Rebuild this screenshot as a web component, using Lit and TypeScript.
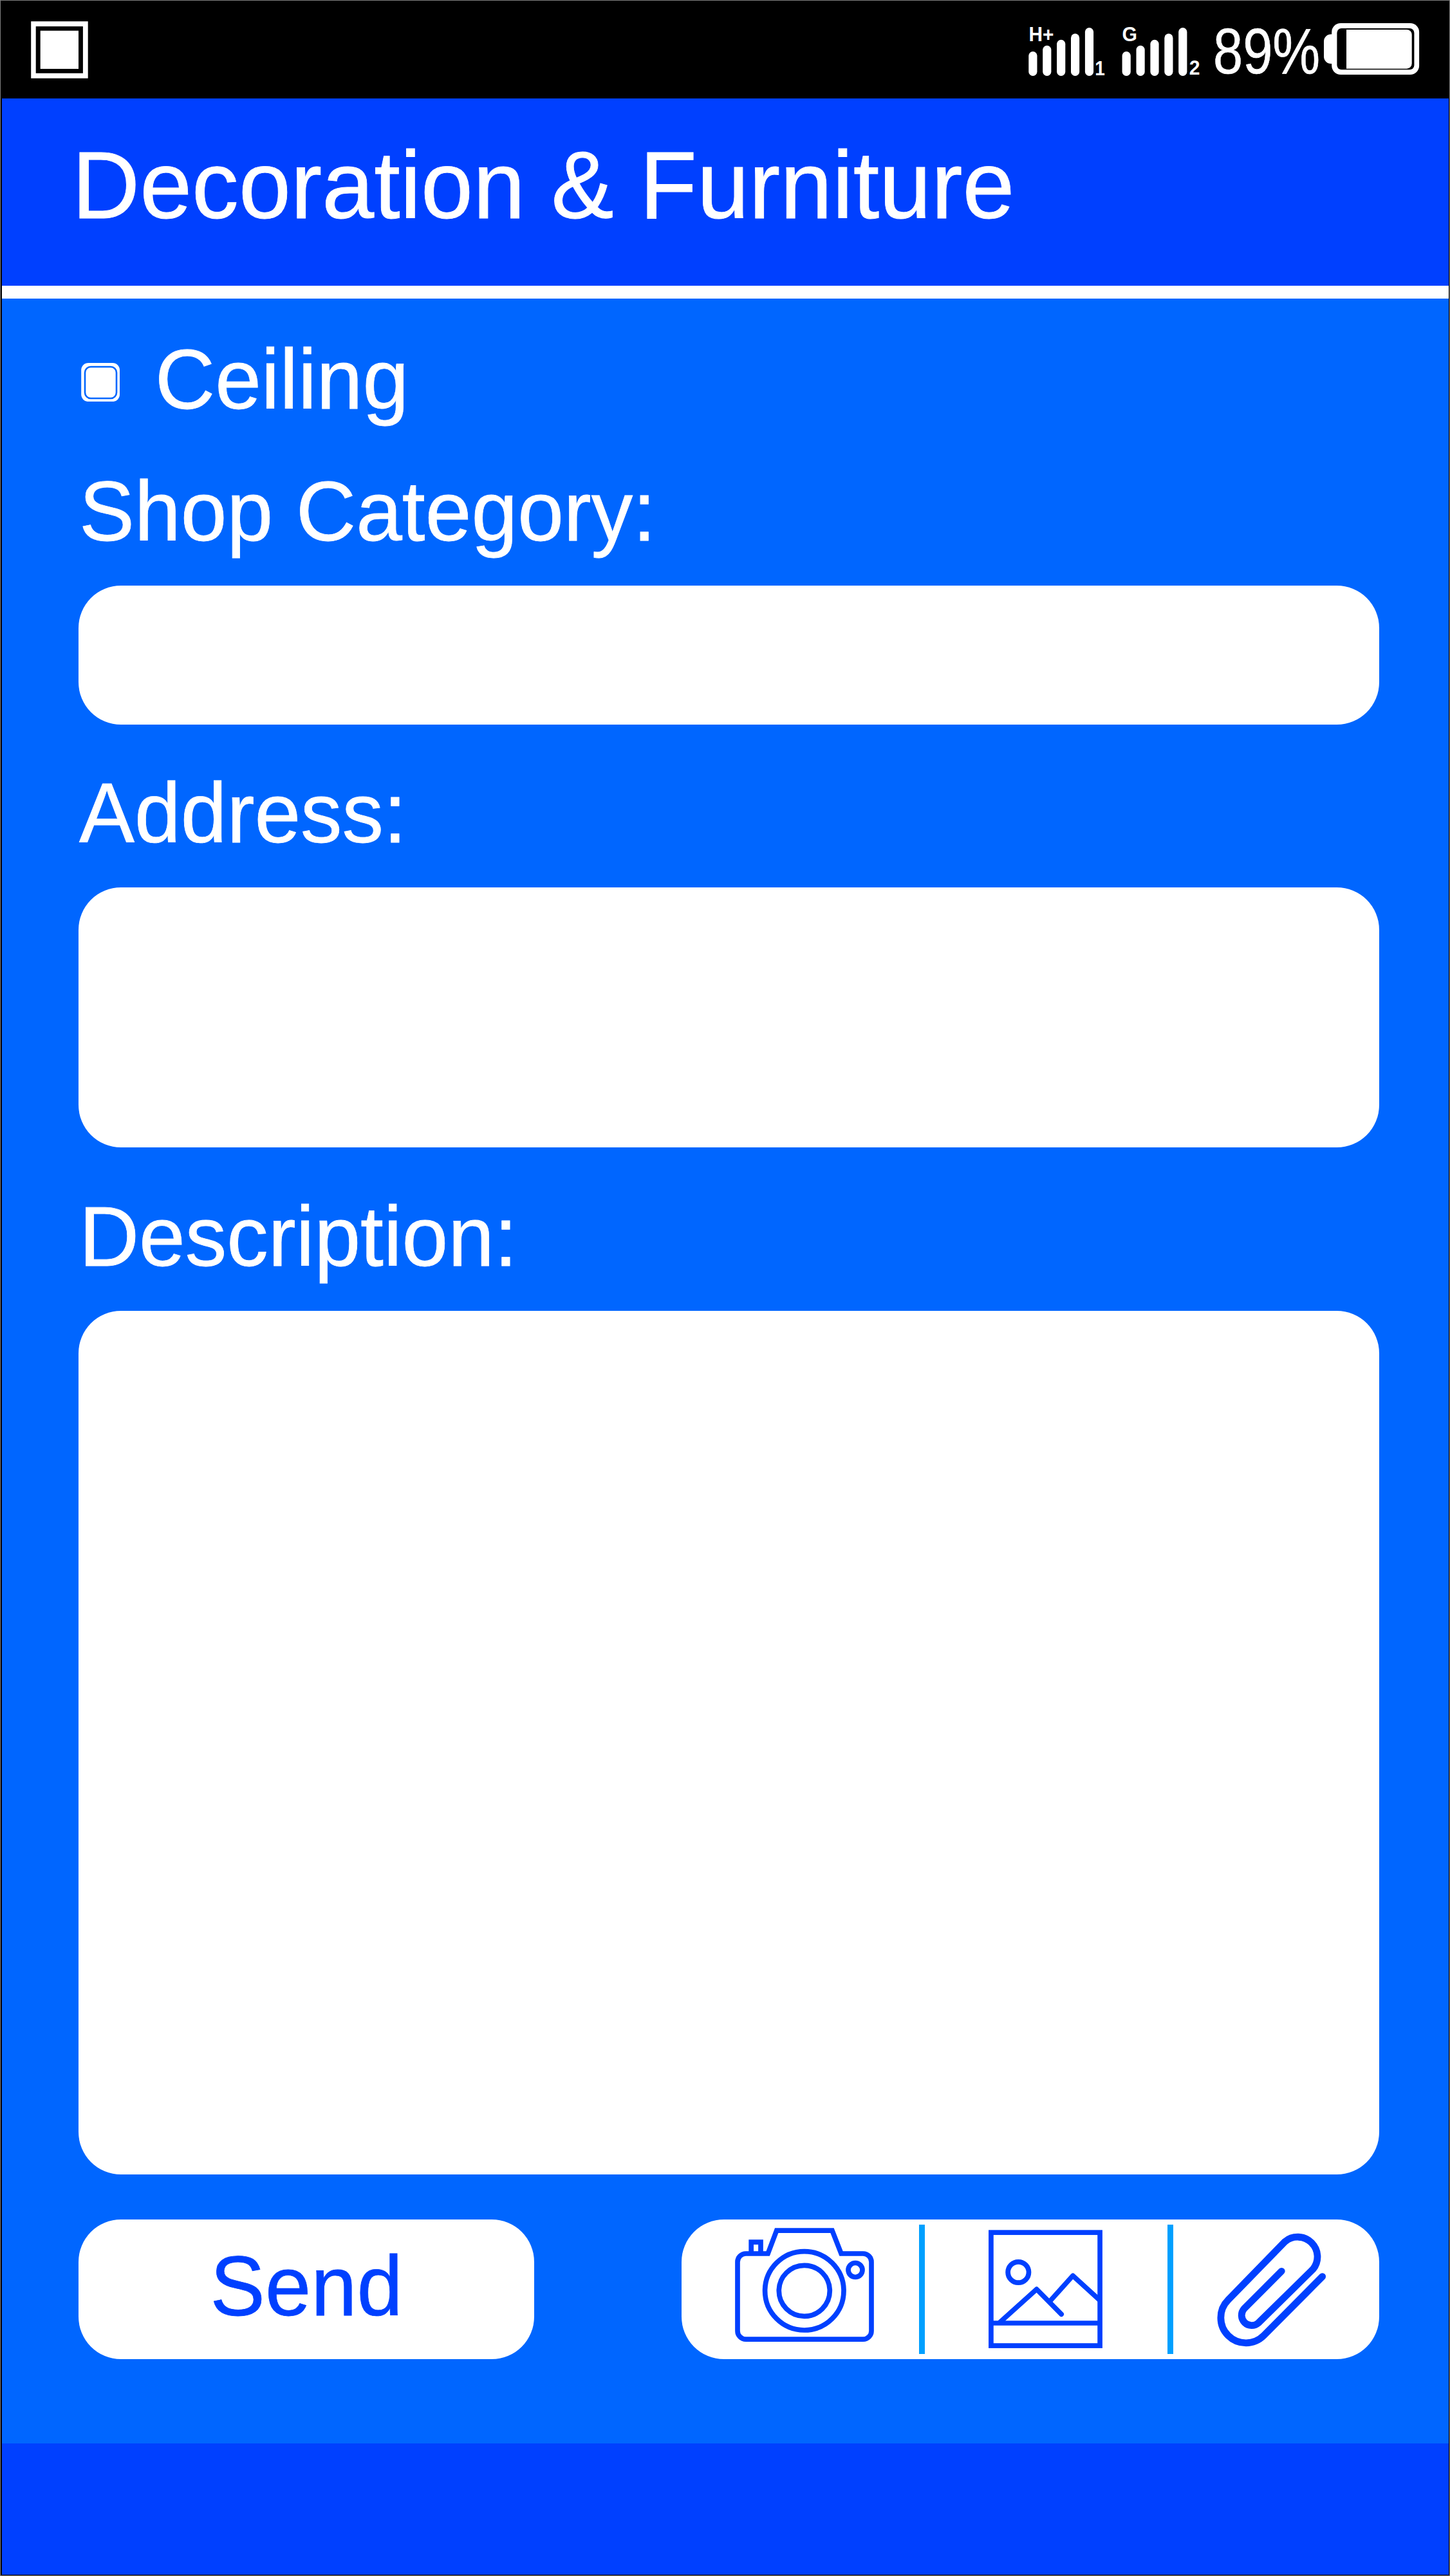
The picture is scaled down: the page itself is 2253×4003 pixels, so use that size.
import { LitElement, html, css, svg } from "lit";
import { customElement, property } from "lit/decorators.js";

const BAR_TOPS = [80, 70.7, 61.7, 52.3, 43];

@customElement("status-bar")
class StatusBar extends LitElement {
  static styles = css`
    :host {
      display: flex;
      justify-content: space-between;
      height: 152px;
      background: #000;
      font-family: "Liberation Sans", Arial, sans-serif;
    }
    svg {
      display: block;
      flex: none;
      overflow: visible;
    }
    .right {
      display: flex;
      padding-right: 37px;
    }
    .tag {
      font-size: 31px;
      font-weight: 700;
      fill: #fff;
    }
    .level {
      width: 179px;
      padding-left: 5px;
      box-sizing: border-box;
    }
    .percent {
      display: inline-block;
      font-size: 101px;
      line-height: 157px;
      color: #fff;
      white-space: nowrap;
      transform: scaleX(0.822);
      transform-origin: 0 0;
      -webkit-text-stroke: 0.6px #fff;
    }
  `;

  private bars(x: number) {
    return BAR_TOPS.map(
      (top, i) => svg`<rect x=${x + i * 21.9} y=${top} width="13.2" height=${118 - top} rx="6.6" fill="#fff"></rect>`
    );
  }

  render() {
    return html`
      <svg width="150" height="152" viewBox="3 1 150 152">
        <rect x="48.2" y="33.2" width="88.5" height="88.5" fill="#fff"></rect>
        <rect x="55.7" y="41" width="73.2" height="72.8" fill="#000"></rect>
        <rect x="62.7" y="47.7" width="59.3" height="59.3" fill="#fff"></rect>
      </svg>
      <div class="right">
        <svg width="140" height="152" viewBox="1590 1 140 152">
          ${this.bars(1598.3)}
          <text class="tag" x="1598.5" y="64.4" textLength="39" lengthAdjust="spacingAndGlyphs">H+</text>
          <text class="tag" x="1701.3" y="116.7" textLength="15.6" lengthAdjust="spacingAndGlyphs">1</text>
        </svg>
        <svg width="150" height="152" viewBox="1730 1 150 152">
          ${this.bars(1743.6)}
          <text class="tag" x="1743.4" y="64.4" textLength="23.5" lengthAdjust="spacingAndGlyphs">G</text>
          <text class="tag" x="1847.8" y="116.2" textLength="16.8" lengthAdjust="spacingAndGlyphs">2</text>
        </svg>
        <div class="level"><span class="percent">89%</span></div>
        <svg width="156" height="152" viewBox="2059 1 156 152">
          <path d="M2071 53.3h-3a11 11 0 0 0-11 11v23.6a11 11 0 0 0 11 11h3z" fill="#fff"></path>
          <rect x="2069.2" y="36" width="135.9" height="80" rx="14" fill="#fff"></rect>
          <rect x="2077.4" y="44" width="120" height="64.2" rx="7" fill="#000"></rect>
          <path d="M2092 46h93.7a8 8 0 0 1 8 8v44.7a8 8 0 0 1-8 8h-93.7z" fill="#fff"></path>
        </svg>
      </div>
    `;
  }
}

@customElement("form-field")
class FormField extends LitElement {
  @property() label = "";

  static styles = css`
    :host {
      display: flex;
      flex-direction: column;
      gap: 50px;
    }
    .label {
      padding: 2px 0 0 1px;
      font-size: 132px;
      line-height: 130px;
      color: #fff;
      white-space: nowrap;
      transform: scaleX(0.977);
      transform-origin: 0 0;
      -webkit-text-stroke: 0.8px #fff;
    }
    .box {
      flex: 1;
      border-radius: 66px;
      background: #fff;
    }
  `;

  render() {
    return html`<div class="label">${this.label}</div><div class="box"></div>`;
  }
}

@customElement("app-root")
class AppRoot extends LitElement {
  static styles = css`
    :host {
      display: block;
      box-sizing: border-box;
      width: 2253px;
      height: 4003px;
      border: 1px solid #808080;
      background: #000;
      font-family: "Liberation Sans", Arial, sans-serif;
      overflow: hidden;
    }
    .screen {
      display: flex;
      flex-direction: column;
      height: 4000px;
    }
    status-bar {
      margin: 0 0 0 2px;
    }
    .page {
      flex: 1;
      display: flex;
      flex-direction: column;
      margin: 0 1px 0 2px;
      background: #0066ff;
    }
    .header {
      height: 291px;
      box-sizing: border-box;
      padding-left: 109px;
      background: #0040ff;
    }
    .title {
      margin: 0;
      font-size: 149px;
      font-weight: 400;
      line-height: 270px;
      color: #fff;
      white-space: nowrap;
      transform: scaleX(0.977);
      transform-origin: 0 0;
      -webkit-text-stroke: 0.9px #fff;
    }
    .rule {
      height: 20px;
      background: #fff;
    }
    .content {
      flex: 1;
      display: flex;
      flex-direction: column;
      padding: 59px 108px 0 119px;
    }
    .choice {
      display: flex;
      align-items: center;
      gap: 55px;
      height: 130px;
      padding: 0 0 0 4px;
      margin-bottom: 75px;
    }
    .check {
      display: block;
      padding-top: 12px;
    }
    .choice-text {
      padding-top: 3px;
      font-size: 132px;
      line-height: 130px;
      color: #fff;
      transform: scaleX(0.977);
      transform-origin: 0 0;
      -webkit-text-stroke: 0.8px #fff;
    }
    .category {
      height: 398px;
      margin-bottom: 71px;
    }
    .address {
      height: 586px;
      margin-bottom: 72px;
    }
    .description {
      height: 1524px;
      margin-bottom: 70px;
    }
    .actions {
      display: flex;
      justify-content: space-between;
      height: 217px;
    }
    .send {
      width: 708px;
      box-sizing: border-box;
      padding: 0 0 9px;
      border: 0;
      border-radius: 66px;
      background: #fff;
      color: #0040ff;
      font: 132px/130px "Liberation Sans", Arial, sans-serif;
    }
    .send-text {
      display: inline-block;
      transform: scaleX(0.97);
      -webkit-text-stroke: 0.8px #0040ff;
    }
    .tools {
      display: flex;
      align-items: center;
      width: 1084px;
      border-radius: 66px;
      background: #fff;
    }
    .tool {
      display: block;
      flex: none;
      fill: none;
      stroke: #0040ff;
      stroke-width: 7.7;
    }
    .clip {
      stroke-width: 10.8;
      stroke-linecap: round;
    }
    .divider {
      flex: none;
      width: 9px;
      height: 201px;
      margin-bottom: 1px;
      background: #00a0ff;
    }
    .footer {
      height: 204px;
      background: #0040ff;
    }
  `;

  render() {
    return html`
      <div class="screen">
        <status-bar></status-bar>
        <div class="page">
          <header class="header"><h1 class="title">Decoration &amp; Furniture</h1></header>
          <div class="rule"></div>
          <main class="content">
            <div class="choice">
              <svg class="check" width="60" height="60" viewBox="126 564 60 60">
                <rect x="126.2" y="564.1" width="59.8" height="60" rx="11" fill="#fff"></rect>
                <rect x="132" y="570" width="49" height="49" rx="9" fill="none" stroke="#0066ff" stroke-width="2.6"></rect>
              </svg>
              <div class="choice-text">Ceiling</div>
            </div>
            <form-field class="category" label="Shop Category:"></form-field>
            <form-field class="address" label="Address:"></form-field>
            <form-field class="description" label="Description:"></form-field>
            <div class="actions">
              <button class="send"><span class="send-text">Send</span></button>
              <div class="tools">
                <svg class="tool" width="369" height="217" viewBox="1059 3449 369 217">
                  <path d="M1159 3502H1193.2L1206.7 3466.2H1293L1307 3502H1341A13 13 0 0 1 1354 3515V3622A13 13 0 0 1 1341 3635.2H1159A13 13 0 0 1 1146 3622V3515A13 13 0 0 1 1159 3502Z"></path>
                  <path d="M1167.2 3502V3484.2H1182V3502"></path>
                  <circle cx="1249.8" cy="3559.8" r="61.2"></circle>
                  <circle cx="1249.8" cy="3559.8" r="39.5"></circle>
                  <circle cx="1329" cy="3527.5" r="11"></circle>
                </svg>
                <div class="divider"></div>
                <svg class="tool" width="377" height="217" viewBox="1437 3449 377 217">
                  <rect x="1539.9" y="3469.2" width="169.2" height="175.9"></rect>
                  <path d="M1540 3610H1709"></path>
                  <circle cx="1582.3" cy="3531" r="16.2"></circle>
                  <path stroke-linejoin="round" d="M1632 3575.3L1667 3536.3L1709 3574.7"></path>
                  <path stroke-linejoin="round" stroke-linecap="round" d="M1553.5 3608.8L1610.7 3557.4L1649.2 3596.2"></path>
                </svg>
                <div class="divider"></div>
                <svg class="tool" width="320" height="217" viewBox="1823 3449 320 217">
                  <path
                    class="clip"
                    d="M2054.7 3537.6L1963.7 3629.3A39 39 0 0 1 1908.3 3574L1996.7 3483.3A30.7 30.7 0 0 1 2040.2 3526.2L1955.3 3609.7A15.7 15.7 0 0 1 1933 3587.7L1991.3 3529.3"
                  ></path>
                </svg>
              </div>
            </div>
          </main>
          <footer class="footer"></footer>
        </div>
      </div>
    `;
  }
}
